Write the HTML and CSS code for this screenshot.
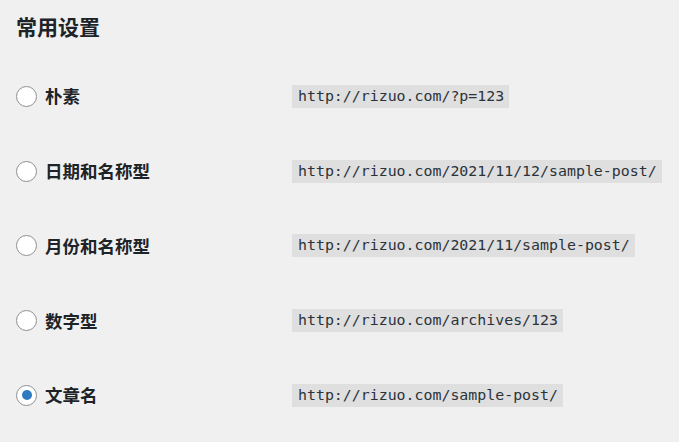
FILE: index.html
```html
<!DOCTYPE html>
<html lang="zh-CN">
<head>
<meta charset="utf-8">
<title>常用设置</title>
<link rel="stylesheet" href="styles.css">
</head>
<body>
<div class="page">
  <h2 class="title">常用设置</h2>
  <div class="options">
    <div class="row">
      <label class="choice"><input type="radio" name="p" class="radio"><span class="name">朴素</span></label>
      <code class="url">http://rizuo.com/?p=123</code>
    </div>
    <div class="row">
      <label class="choice"><input type="radio" name="p" class="radio"><span class="name">日期和名称型</span></label>
      <code class="url">http://rizuo.com/2021/11/12/sample-post/</code>
    </div>
    <div class="row">
      <label class="choice"><input type="radio" name="p" class="radio"><span class="name">月份和名称型</span></label>
      <code class="url">http://rizuo.com/2021/11/sample-post/</code>
    </div>
    <div class="row">
      <label class="choice"><input type="radio" name="p" class="radio"><span class="name">数字型</span></label>
      <code class="url">http://rizuo.com/archives/123</code>
    </div>
    <div class="row">
      <label class="choice"><input type="radio" name="p" class="radio" checked><span class="name">文章名</span></label>
      <code class="url">http://rizuo.com/sample-post/</code>
    </div>
  </div>
</div>
</body>
</html>
```
FILE: styles.css
```css
html, body {
  margin: 0;
  padding: 0;
  background: #f0f0f1;
}
body {
  font-family: "Noto Sans CJK SC", "Noto Sans", sans-serif;
  color: #1d2327;
}
.page {
  padding: 16px 0 0 16px;
}
.title {
  margin: 0;
  font-size: 21px;
  line-height: 21px;
  height: 21px;
  font-weight: 700;
}
.options {
  margin-top: 22px;
  display: flex;
  flex-direction: column;
}
.row {
  height: 74.75px;
  display: grid;
  grid-template-columns: 276px auto;
  align-items: center;
  justify-items: start;
}
.choice {
  display: flex;
  align-items: center;
  gap: 8px;
}
.radio {
  appearance: none;
  -webkit-appearance: none;
  margin: 0;
  width: 21px;
  height: 21px;
  border: 1px solid #8c8f94;
  border-radius: 50%;
  background: #fff;
  box-sizing: border-box;
  display: flex;
  align-items: center;
  justify-content: center;
}
.radio:checked::before {
  content: "";
  width: 10px;
  height: 10px;
  border-radius: 50%;
  background: #2f7bc2;
}
.name {
  font-size: 17.5px;
  line-height: 20px;
  font-weight: 700;
}
.url {
  font-family: "DejaVu Sans Mono", monospace;
  font-size: 14.9px;
  line-height: 23px;
  height: 23px;
  padding: 0 5px 0 6px;
  background: rgba(0, 0, 0, 0.07);
  color: #2c3338;
}
```
